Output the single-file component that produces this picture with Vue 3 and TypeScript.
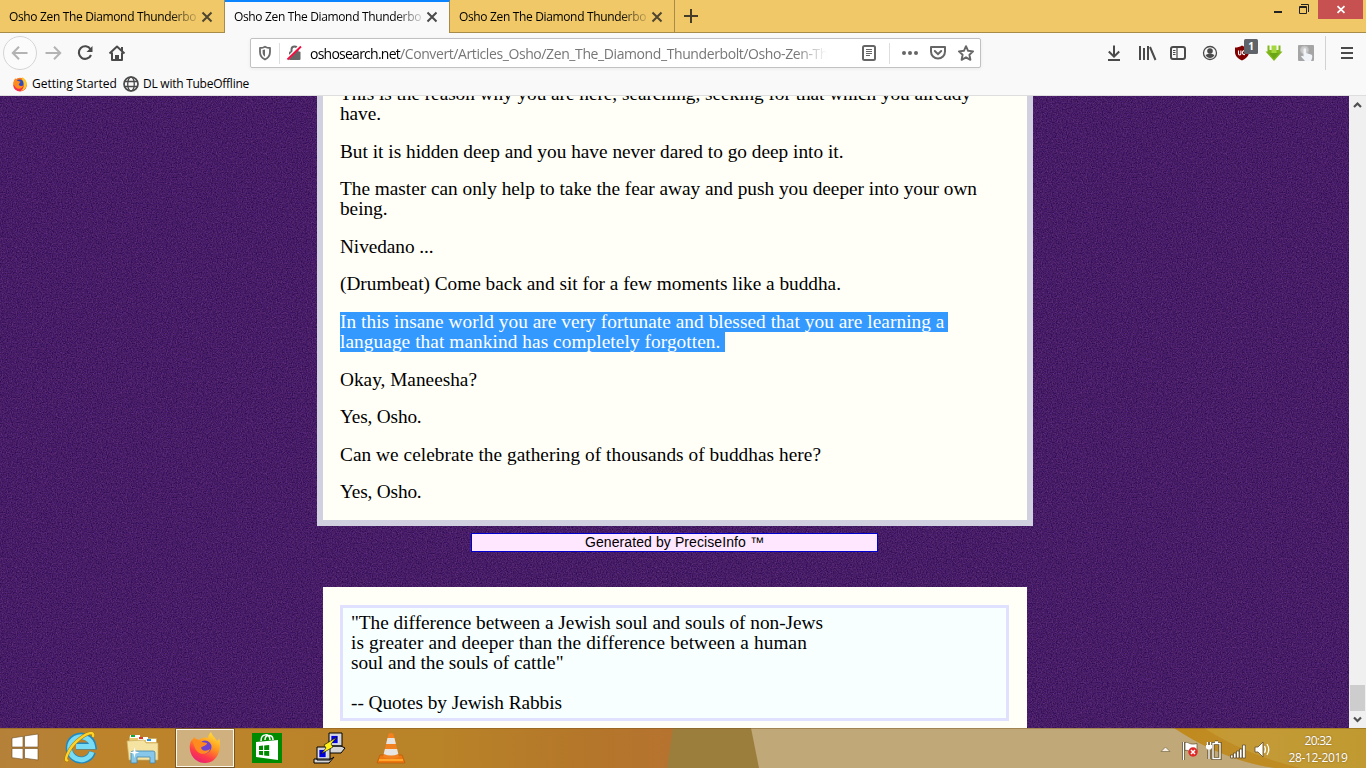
<script setup lang="ts">
import type { Directive } from 'vue'

interface Line { text: string; width: number }
interface Paragraph { lines: Line[]; selected?: boolean }

// Spreads the letters of a line so that it fills the given width.
const vFit: Directive<HTMLElement, number> = {
  mounted(el, binding) {
    const natural = el.getBoundingClientRect().width
    const count = (el.textContent ?? '').length
    if (count > 0) el.style.letterSpacing = `${(binding.value - natural) / count}px`
  },
}

const tabTitle = 'Osho Zen The Diamond Thunderbo'
const tabs = [{ active: false }, { active: true }, { active: false }]

const paragraphs: Paragraph[] = [
  { lines: [
    { text: 'This is the reason why you are here, searching, seeking for that which you already', width: 631 },
    { text: 'have.', width: 41 },
  ] },
  { lines: [{ text: 'But it is hidden deep and you have never dared to go deep into it.', width: 503.5 }] },
  { lines: [
    { text: 'The master can only help to take the fear away and push you deeper into your own', width: 637 },
    { text: 'being.', width: 47.5 },
  ] },
  { lines: [{ text: 'Nivedano ...', width: 93.5 }] },
  { lines: [{ text: '(Drumbeat) Come back and sit for a few moments like a buddha.', width: 501 }] },
  { selected: true, lines: [
    { text: 'In this insane world you are very fortunate and blessed that you are learning a', width: 604.5 },
    { text: 'language that mankind has completely forgotten.', width: 380.5 },
  ] },
  { lines: [{ text: 'Okay, Maneesha?', width: 137 }] },
  { lines: [{ text: 'Yes, Osho.', width: 81.5 }] },
  { lines: [{ text: 'Can we celebrate the gathering of thousands of buddhas here?', width: 481 }] },
  { lines: [{ text: 'Yes, Osho.', width: 81.5 }] },
]

const quote: Line[] = [
  { text: '"The difference between a Jewish soul and souls of non-Jews', width: 472 },
  { text: 'is greater and deeper than the difference between a human', width: 456 },
  { text: 'soul and the souls of cattle"', width: 212.5 },
  { text: '', width: 0 },
  { text: '-- Quotes by Jewish Rabbis', width: 211 },
]
</script>

<template>
  <div class="screen">
    <header class="tabstrip">
      <div v-for="(tab, i) in tabs" :key="i" class="tab" :class="{ active: tab.active }">
        <span class="tab-title"><span v-fit="187" class="fit">{{ tabTitle }}</span></span>
        <svg class="tab-close" width="12" height="12" viewBox="0 0 12 12"><path d="M1.5 1.5l9 9M10.5 1.5l-9 9" /></svg>
      </div>
      <svg class="plus" width="14" height="14" viewBox="0 0 14 14"><path d="M7 0v14M0 7h14" /></svg>
      <div class="controls">
        <svg width="96" height="19" viewBox="0 0 96 19">
          <rect x="4" y="11" width="8" height="2" fill="#222" />
          <path d="M29.500 6.500h7v7h-7zM29 7.500h8M31 4.500h7.500V12" fill="none" stroke="#222" />
          <rect x="48" y="0" width="45" height="19" fill="#c75050" />
          <path d="M67.500 6.200l7 6.600M74.500 6.200l-7 6.600" fill="none" stroke="#fff" stroke-width="1.800" />
        </svg>
      </div>
    </header>

    <nav class="toolbar">
      <svg class="nav-icons" width="135" height="38" viewBox="0 0 135 38" fill="none">
        <circle cx="20" cy="20" r="16.500" fill="#fbfbfb" stroke="#d5d5d5" />
        <path d="M27.500 20H13M19 13.800L12.800 20l6.200 6.200" stroke="#b3b3b3" stroke-width="2" />
        <path d="M45.500 20h14.500M54 13.800l6.200 6.200-6.200 6.200" stroke="#b3b3b3" stroke-width="2" />
        <path d="M90.500 16.200A6.300 6.300 0 1 0 91 22" stroke="#4a4a4a" stroke-width="2.100" />
        <path d="M92.500 13v6h-6z" fill="#4a4a4a" />
        <path d="M109.500 20.500l7.500-7 7.500 7M112 19.500V27h10V19.500" stroke="#4a4a4a" stroke-width="2" stroke-linejoin="round" />
        <path d="M121 14h2v4h-2zM115 22h4v5h-4z" fill="#4a4a4a" />
      </svg>

      <div class="urlbar">
        <svg class="shield" width="60" height="28" viewBox="0 0 60 28" fill="none">
          <path d="M9 9c2 0 4-.7 5-1.300C15 8.300 17 9 19 9v4c0 3.600-2 6-5 7.500C11 19 9 16.600 9 13z" stroke="#6a6a6a" stroke-width="1.800" stroke-linejoin="round" />
          <path d="M14 10.500v7.300c-1.700-1-2.400-2.700-2.400-4.700v-2c.9-.1 1.700-.3 2.400-.6z" fill="#6a6a6a" />
          <path d="M28.500 4v21" stroke="#dedede" />
          <path d="M40.500 13v-2.500a3 3 0 0 1 6 0V13" stroke="#666" stroke-width="2" />
          <rect x="38" y="12.500" width="11.500" height="8.500" rx="1" fill="#666" />
          <path d="M36 20L49 7" stroke="#fff" stroke-width="3" />
          <path d="M36.500 20.500L50 7.500" stroke="#f5083c" stroke-width="1.800" />
        </svg>
        <span class="url"><span v-fit="90" class="fit host">oshosearch.net</span><span v-fit="428" class="fit path">/Convert/Articles_Osho/Zen_The_Diamond_Thunderbolt/Osho-Zen-Th</span></span>
        <svg class="url-icons" width="126" height="28" viewBox="0 0 126 28" fill="none" stroke="#666">
          <rect x="8" y="7" width="12" height="14" rx="1.500" stroke-width="2" />
          <path d="M11 10.500h6M11 12.500h6M11 14.500h6M11 16.500h4" />
          <path d="M34.500 4v21" stroke="#dedede" />
          <g fill="#666" stroke="none"><circle cx="49" cy="14" r="2" /><circle cx="55" cy="14" r="2" /><circle cx="61" cy="14" r="2" /></g>
          <path d="M76 8h14v4.500a7 7 0 0 1-14 0z" stroke-width="2" stroke-linejoin="round" />
          <path d="M79.800 12l3.200 3.200 3.200-3.200" stroke-width="2" stroke-linecap="round" />
          <path d="M111 7.200l2.100 4.600 5 .6-3.700 3.400 1 5-4.400-2.500-4.400 2.500 1-5-3.700-3.400 5-.6z" stroke-width="1.900" stroke-linejoin="round" />
        </svg>
      </div>

      <svg class="ext-icons" width="260" height="38" viewBox="0 0 260 38" fill="none" stroke="#4a4a4a">
        <path d="M8 12.500V23M2.800 18.500L8 23.700l5.200-5.200M2 27h12" stroke-width="2" />
        <path d="M34 13v14M38 15v12M42 13v14M44 14l5.500 13" stroke-width="2" />
        <rect x="65" y="14" width="14" height="12" rx="2" stroke-width="2" /><path d="M71 14v12M67 17.500h2.500M67 19.500h2.500M67 21.500h2.500" stroke-width="1.200" />
        <circle cx="104" cy="20" r="6.500" stroke-width="1.300" /><circle cx="104" cy="18" r="2.800" fill="#4a4a4a" stroke="none" /><path d="M99.500 22c3-2 6-2 9 0-1 2-2.500 3-4.500 3s-3.500-1-4.500-3z" fill="#4a4a4a" stroke="none" />
        <path d="M136 12.500c-2.500 1.500-4.500 2-7 2v4.500c0 4 3 6.500 7 8.500 4-2 7-4.500 7-8.500V14.500c-2.500 0-4.500-.5-7-2z" fill="#800000" stroke="none" />
        <path d="M132.500 17.500v3q0 1.500 1.200 1.500t1.200-1.500v-3M139 17.700a2 2 0 1 0 0 3.800" stroke="#fff" stroke-width="1.100" />
        <rect x="138" y="6" width="14" height="15" rx="1.500" fill="#606369" stroke="none" />
        <text x="145" y="17.300" text-anchor="middle" class="badge">1</text>
        <path d="M161.500 12.500h2v4.500h9v-4.500h2v6h2L168 28l-8.500-9.500h2z" fill="#80b81b" stroke="none" />
        <path d="M165.500 12.500h5v9h-5z" fill="#a4d83c" stroke="none" />
        <path d="M163 20h10l-5 6z" fill="#6aa516" stroke="none" />
        <rect x="192" y="12" width="16" height="16" rx="1" fill="#a5a5a5" stroke="none" />
        <circle cx="198.500" cy="17" r="4" fill="#ccc" stroke="#bbb" />
        <path d="M197.500 16q1.500-1.500 2.500 0v4l5 1.500c1.500.5 1.500 1.500 1 4L205 28h-6l-4-4.500q1-1.500 2.500 0z" fill="#f0f3f8" stroke="none" />
        <path d="M219.500 3v34" stroke="#d2d2d2" />
        <path d="M235 15h12M235 20h12M235 25h12" stroke-width="2" />
      </svg>
    </nav>

    <div class="bookmarks">
      <svg width="16" height="16" viewBox="0 0 36 36">
        <circle cx="18" cy="19" r="15" fill="#ff7a1c" />
        <path d="M3 20a15 15 0 0 0 30 0l-9-2z" fill="#f5304e" />
        <path d="M22 2c8 4 12 10 11 18-1 9-7 13-14 13 8-5 9-11 5-18z" fill="#ffc72e" />
        <circle cx="17" cy="17" r="9" fill="#334bb8" /><path d="M3 18C3 12 5 7 8 5l3 5 8 3-4 6c4 6 9 3 11 1-2 9-13 12-19 4z" fill="#ff8a1e" />
      </svg>
      <span v-fit="79" class="fit bm1">Getting Started</span>
      <svg class="globe" width="16" height="16" viewBox="0 0 16 16" fill="none" stroke="#4a4a4a" stroke-width="1.300">
        <circle cx="8" cy="8" r="7" stroke-width="1.700" /><ellipse cx="8" cy="8" rx="3.300" ry="7" /><path d="M1.500 5.500h13M1.500 10.500h13" />
      </svg>
      <span v-fit="106" class="fit bm2">DL with TubeOffline</span>
    </div>

    <main class="viewport">
      <div class="page">
        <svg class="noise" width="1349" height="632">
          <filter id="grain" x="0" y="0" width="100%" height="100%" color-interpolation-filters="sRGB">
            <feTurbulence type="fractalNoise" baseFrequency="0.8" numOctaves="3" seed="4" />
            <feColorMatrix type="matrix" values="0.32 0 0 0 0.118  0.2 0.06 0 0 -0.018  0.22 0 0.14 0 0.222  0 0 0 0 1" />
          </filter>
          <rect width="1349" height="632" filter="url(#grain)" />
        </svg>
        <article class="article">
          <p v-for="(p, i) in paragraphs" :key="i">
            <span v-for="(l, j) in p.lines" :key="j" class="line">
              <span :class="{ selected: p.selected, tail: p.selected && j === 1 }"><span v-fit="l.width" class="fit">{{ l.text }}</span></span>
            </span>
          </p>
        </article>
        <div class="generated"><span v-fit="179" class="fit">Generated by PreciseInfo ™</span></div>
        <section class="quote-card">
          <div class="quote">
            <span v-for="(l, i) in quote" :key="i" class="line"><span v-fit="l.width" class="fit">{{ l.text }}</span></span>
          </div>
        </section>
      </div>
      <div class="scrollbar">
        <svg width="17" height="17" viewBox="0 0 17 17"><path d="M5 11l3.500-3.500L12 11" /></svg>
        <div class="thumb"></div>
        <svg width="17" height="17" viewBox="0 0 17 17"><path d="M5 6.500l3.500 3.500L12 6.500" /></svg>
      </div>
    </main>

    <footer class="taskbar">
      <svg class="wall" width="1366" height="40" viewBox="0 0 1366 40" preserveAspectRatio="none">
        <defs>
          <linearGradient id="wood"><stop offset="0" stop-color="#b98335" /><stop offset=".1" stop-color="#bd832c" /><stop offset=".65" stop-color="#b98328" /><stop offset=".88" stop-color="#b4762a" /><stop offset="1" stop-color="#b67330" /></linearGradient>
          <linearGradient id="gold"><stop offset="0" stop-color="#c8941f" /><stop offset=".3" stop-color="#c49a37" /><stop offset="1" stop-color="#c09a31" /></linearGradient>
        </defs>
        <rect width="674" height="40" fill="url(#wood)" />
        <path d="M0 0h76L60 40H0z" fill="#b27f3b" opacity=".5" />
        <path d="M673 0h79l8 40h-93z" fill="#9b7e3c" />
        <path d="M751 0h615v40H759z" fill="#c0a878" />
        <path d="M1174 0h192v40h-90c-34-4-70-19-102-40z" fill="url(#gold)" />
        <path d="M1174 0c32 21 68 36 102 40h25c-40-9-70-23-97-40z" fill="#bd841c" opacity=".65" />
        <path d="M0 .5h1366" stroke="#775018" opacity=".4" />
      </svg>
      <div class="apps">
        <svg width="50" height="40" viewBox="0 0 50 40"><path d="M12 10l11-1.700v10.700H12zM24.500 8L38 6v13H24.500zM12 20.500h11v10.700L12 29.700zM24.500 20.500H38V32l-13.500-1.800z" fill="#fff" stroke="#6c4b20" stroke-width=".6" /></svg>
        <svg width="62" height="40" viewBox="50 0 62 40" fill="none">
          <path d="M92.500 24A12 12 0 1 1 93 18H76" stroke="#2389bd" stroke-width="7" />
          <path d="M92 24A11.500 11.500 0 1 1 92.500 18.500H76" stroke="#79dcf5" stroke-width="5" />
          <path d="M68 32c-5 3 0-11 9-19C86 5 95 2 93 9" stroke="#a97808" stroke-width="3.500" />
          <path d="M68 32c-5 3 0-11 9-19C86 5 95 2 93 9" stroke="#ffd42a" stroke-width="2.400" />
        </svg>
        <svg width="63" height="40" viewBox="112 0 63 40">
          <path d="M129 8h10l2 2h16v22h-28z" fill="#e8c76e" stroke="#a98440" stroke-width=".7" /><path d="M130 7h10v3h-10zM138 9h10v3h-10zM146 11h10v3h-10z" fill="#fff" /><path d="M131 7h4v2h-4z" fill="#13a83b" /><path d="M139 9h4v2h-4z" fill="#d63a25" /><path d="M147 11h4v2h-4z" fill="#2a93e0" />
          <path d="M127 13l17-1 2 3h12v17h-29z" fill="#f5e3a1" stroke="#ccae62" stroke-width=".7" />
          <path d="M131 35V25q0-2 2-2h20q2 0 2 2v10h-5v-6h-13v6z" fill="#86c7ea" stroke="#4587ae" stroke-width=".8" /><path d="M134.500 19l1 4.500 4 1-4 1-1 4.500-1-4.500-4-1 4-1z" fill="#fff" />
        </svg>
        <div class="active-app">
          <svg width="56" height="36" viewBox="177 2 56 36">
            <defs>
              <linearGradient id="fox" x1=".8" y1="0" x2=".3" y2="1"><stop offset="0" stop-color="#ffe53b" /><stop offset=".45" stop-color="#ff921f" /><stop offset=".75" stop-color="#ff3b49" /><stop offset="1" stop-color="#e81e75" /></linearGradient>
            </defs>
            <path d="M194 9c2 2 3 3 5 3 2-2 5-3 9-2 0-2 1-4 3-6 1 4 4 5 6 9 2-1 2-2 2-3 3 8 0 25-14 25-12 0-18-13-14-22l2-2z" fill="url(#fox)" />
            <circle cx="205" cy="19" r="6.500" fill="#6e43ce" /><path d="M192 12c5-2 8 0 10 2l5 1c0 3-5 3-6 5 2 4 6 3 9 1-1 6-12 7-15-1z" fill="#ff8b20" />
          </svg>
        </div>
        <svg width="62" height="40" viewBox="235 0 62 40">
          <rect x="252" y="5" width="30" height="30" fill="#008a00" />
          <path d="M256 14l22-2v20l-22-3z" fill="#fff" /><path d="M261 13c0-8 9-8 9-1M265 12c0-6 8-6 8 0" fill="none" stroke="#fff" stroke-width="1.500" />
          <path d="M259 18l4-.4V22h-4zM264.200 17.400l5-.5V22h-5zM259 23h4v4.200l-4-.5zM264.200 23h5v5l-5-.6z" fill="#008a00" />
        </svg>
        <svg width="64" height="40" viewBox="297 0 64 40" stroke="#000">
          <path d="M329 5h13v13h-13zM327 18h14l4 2-4 5h-17z" fill="#d5d5d5" /><path d="M331 7.500h7v8h-7z" fill="#00d" stroke="#fff" stroke-width=".6" />
          <path d="M317 19h13v13h-13zM314 31h17l3-2-5 6h-15z" fill="#d5d5d5" /><path d="M319 21.500h7v8h-7z" fill="#00d" stroke="#fff" stroke-width=".6" />
          <path d="M337 9l-13 8 2 3-5 6 12-7-2-3z" fill="#fff21a" stroke-width=".6" />
        </svg>
        <svg width="62" height="40" viewBox="361 0 62 40">
          <path d="M380 27h22l3 8h-28z" fill="#ed780f" stroke="#b95206" stroke-width=".6" /><path d="M388.500 6q2.500-2 5 0L399 29q-8 4-16 0z" fill="#f28220" /><path d="M387.500 10h7l1.400 6h-9.800zM384.900 21h12.200l1.200 5q-7 3-14.600 0z" fill="#e7e5e2" /><path d="M379 32h24" stroke="#ffa52c" stroke-width="2" />
        </svg>
      </div>
      <div class="tray">
        <svg width="120" height="40" viewBox="1160 0 120 40" fill="none">
          <path d="M1162 23.500l4.500-4.500 4.500 4.500z" fill="#f5f0e4" stroke="#776947" stroke-width=".7" />
          <path d="M1184.500 14v18" stroke="#5e4c28" stroke-width="3" /><path d="M1184.500 14v18" stroke="#fff" stroke-width="1.400" /><path d="M1186 14.500c4-1 4 3 12 1v8c-8 2-8-2-12-1z" fill="#fff" stroke="#5e4c28" stroke-width=".7" />
          <circle cx="1194" cy="24" r="4.700" fill="#df2a2a" /><path d="M1192 22l4 4M1196 22l-4 4" stroke="#fff" stroke-width="1.500" />
          <g stroke="#5e4c28" stroke-width="3.200"><path d="M1214 15.500h7v15h-7zM1216 14h3M1210 14v17M1207.500 18h5" /></g>
          <path d="M1214 15.500h7v15h-7zM1216 14h3M1210 22v9M1208.500 14v4M1211.500 14v4" stroke="#fff" stroke-width="1.400" /><path d="M1207 17h6v3q-3 4-6 0z" fill="#fff" />
          <g fill="#fff" stroke="#5e4c28" stroke-width=".8"><path d="M1231.500 27h2.500v3h-2.500zM1234.500 25h2.500v5h-2.500zM1237.500 23h2.500v7h-2.500zM1240.500 21h2.500v9h-2.500zM1243.500 17h2.800v13h-2.800z" /></g>
          <path d="M1256 19h3l5-5v15l-5-5h-3z" fill="#fff" stroke="#5e4c28" stroke-width=".8" /><path d="M1265.500 18q2 3.500 0 7M1268 16q3.500 5.500 0 11" stroke="#fff" stroke-width="1.200" />
        </svg>
        <div class="clock"><div><span v-fit="27" class="fit">20:32</span></div><div><span v-fit="59" class="fit">28-12-2019</span></div></div>
      </div>
    </footer>
  </div>
</template>

<style>
body { margin: 0; overflow: hidden; }
</style>

<style scoped>
* { box-sizing: border-box; }
svg { display: block; flex: none; }
.screen { width: 1366px; height: 768px; display: flex; flex-direction: column; overflow: hidden; font: 12px/16px "Open Sans", "Noto Sans", sans-serif; color: #000; }
.fit { display: inline-block; white-space: pre; }

.tabstrip { height: 33px; flex: none; display: flex; background: #f0c868; box-shadow: inset 0 -1px #a78b49; }
.tab { width: 225px; height: 33px; padding: 0 12px 0 9px; display: flex; align-items: center; border-right: 1px solid #a78b49; }
.tab.active { background: #f9f9fa; border-top: 2px solid #0a84ff; }
.tab.active .tab-title, .tab.active .tab-close { margin-top: -2px; }
.tab-title { width: 188px; height: 20px; line-height: 20px; flex: none; -webkit-mask-image: linear-gradient(90deg, #000 85%, rgba(0, 0, 0, .15)); mask-image: linear-gradient(90deg, #000 85%, rgba(0, 0, 0, .15)); }
.tab-close { margin-left: 4px; fill: none; stroke: #4f462f; stroke-width: 2; }
.active .tab-close { stroke: #4a4a4a; }
.plus { margin: 9px 0 0 9px; fill: none; stroke: #463d28; stroke-width: 2; }
.controls { margin-left: auto; }

.toolbar { height: 38px; flex: none; display: flex; background: #f9f9fa; }
.urlbar { width: 731px; height: 30px; margin: 5px 0 0 115px; display: flex; background: #fff; border: 1px solid #c1c1c3; border-radius: 2px; box-shadow: 0 1px 4px rgba(0, 0, 0, .06); }
.url { width: 517px; margin-right: 28px; overflow: hidden; white-space: nowrap; font-size: 14px; line-height: 30px; -webkit-mask-image: linear-gradient(90deg, #000 94%, transparent); mask-image: linear-gradient(90deg, #000 94%, transparent); }
.shield { margin-right: -1px; }
.url-icons { margin-right: -4px; }
.path { color: #777; }
.ext-icons { margin-left: auto; width: 260px; }
.badge { font: 700 10px "Open Sans", sans-serif; fill: #fff; stroke: none; }

.bookmarks { height: 25px; flex: none; display: flex; align-items: center; padding: 1px 0 0 12px; background: #f9f9fa; border-bottom: 1px solid #dedede; }
.bookmarks .fit { padding-top: 1px; }
.bm1 { margin-left: 4px; width: 79px; }
.globe { margin-left: 12px; }
.bm2 { margin-left: 4px; }

.viewport { height: 632px; flex: none; display: flex; overflow: hidden; }
.page { width: 1349px; height: 632px; overflow: hidden; position: relative; display: flex; flex-direction: column; align-items: center; background: #461c64; }
.noise { position: absolute; inset: 0; }
.article, .generated, .quote-card { position: relative; flex: none; }
.article { width: 716px; height: 442px; margin: -12px 1px 0 2px; padding: 0 17px; background: #fffff7; border: 6px solid #d0d0e0; border-top: 0; font: 19.3px/20px "Liberation Serif", serif; }
p { margin: 0 0 17.6px; }
.line { display: block; height: 20px; white-space: nowrap; }
.selected { display: inline-block; height: 20px; background: #3399ff; color: #fff; padding-right: 3px; }
.selected.tail { padding-right: 4px; }
.generated { width: 407px; height: 19px; margin: 7px 0 35px; background: #ffe7ff; border: 1px solid #0000d0; text-align: center; font: 14px/17px "Liberation Sans", sans-serif; }
.quote-card { width: 704px; height: 200px; margin-left: 1px; padding: 18px 18px 0 17px; background: #fffff7; }
.quote { height: 116px; padding: 5px 8px; border: 3px solid #e0e0ff; background: #f7ffff; font: 19.3px/20px "Liberation Serif", serif; }
.scrollbar { width: 17px; height: 632px; display: flex; flex-direction: column; background: #f0f0f0; }
.scrollbar svg { fill: none; stroke: #505050; stroke-width: 2.2; }
.thumb { width: 15px; height: 26px; margin: auto 1px 0; background: #cdcdcd; }

.taskbar { height: 40px; flex: none; position: relative; display: flex; justify-content: space-between; }
.wall { position: absolute; inset: 0; }
.apps, .tray { position: relative; display: flex; }
.active-app { width: 58px; height: 38px; margin: 1px; background: rgba(220, 207, 184, .6); border: 1px solid #fff8ea; box-shadow: 0 0 0 1px #795625; }
.clock { width: 87px; padding: 4px 9px 0 0; text-align: center; color: #fff; line-height: 17px; text-shadow: 0 0 2px #795d25; }
</style>
